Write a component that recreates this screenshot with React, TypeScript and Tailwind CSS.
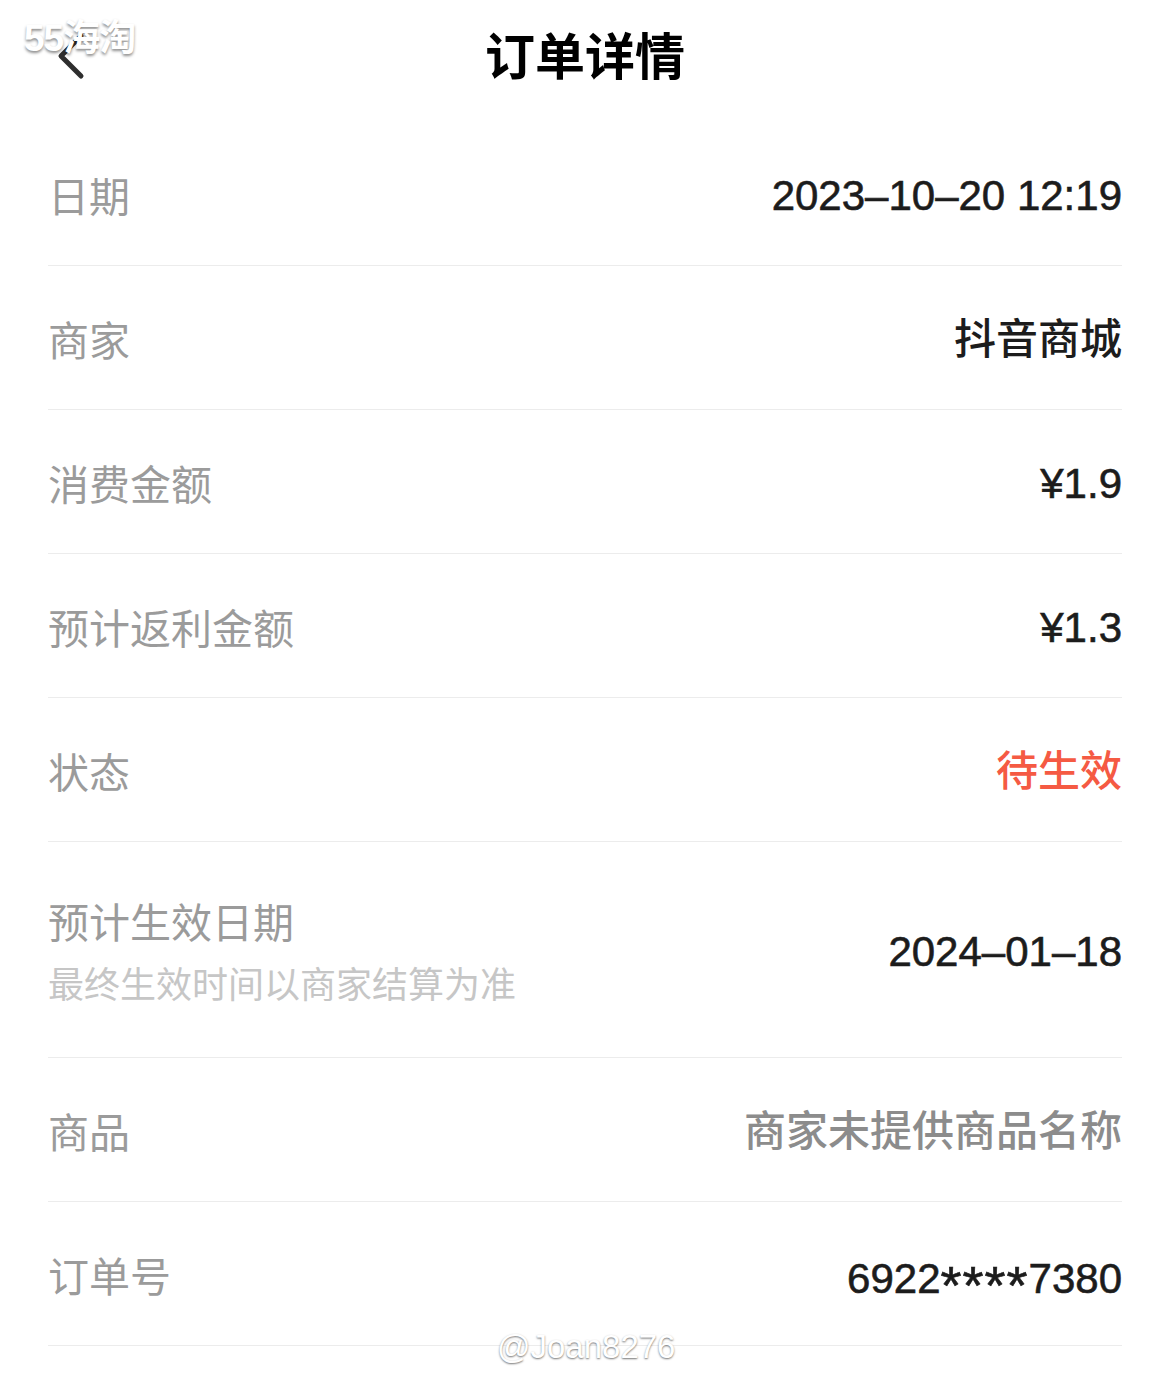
const rows: { label: string; value: string; tone?: "red" | "muted"; hint?: string }[] = [
  { label: "日期", value: "2023–10–20 12:19" },
  { label: "商家", value: "抖音商城" },
  { label: "消费金额", value: "¥1.9" },
  { label: "预计返利金额", value: "¥1.3" },
  { label: "状态", value: "待生效", tone: "red" },
  { label: "预计生效日期", value: "2024–01–18", hint: "最终生效时间以商家结算为准" },
  { label: "商品", value: "商家未提供商品名称", tone: "muted" },
  { label: "订单号", value: "6922****7380" },
];

function BackIcon() {
  return (
    <svg width="32" height="50" viewBox="0 0 32 50" fill="none">
      <path d="M25 4 L5 24 L25 44" stroke="#2e2e2e" strokeWidth="5" strokeLinecap="round" strokeLinejoin="round" />
    </svg>
  );
}

// asterisks in the order number render wider in the original font
function Value({ text }: { text: string }) {
  const m = text.match(/^(\d+)(\*+)(\d+)$/);
  if (!m) return <>{text}</>;
  return (
    <>
      {m[1]}
      <span className="relative top-[11px] text-[54px] leading-none tracking-[1px]">{m[2]}</span>
      {m[3]}
    </>
  );
}

const isLatin = (s: string) => /^[\x00-\x7f¥–]+$/.test(s);

export default function App() {
  return (
    <div
      className="relative w-[1170px] h-[1398px] bg-white overflow-hidden"
      style={{ fontFamily: '"Liberation Sans", "Noto Sans CJK SC", sans-serif' }}
    >
      <header className="relative h-[122px] flex items-center justify-center">
        <div className="absolute left-[56px] top-[32px]">
          <BackIcon />
        </div>
        <h1 className="text-[50px] font-bold text-black leading-none -mt-[16px] font-['Noto_Sans_CJK_SC',sans-serif]">
          订单详情
        </h1>
      </header>

      <div className="mx-[48px]">
        {rows.map((r) => (
          <div
            key={r.label}
            className={`flex items-center justify-between border-b border-[#ececec] ${r.hint ? "h-[216px]" : "h-[144px]"}`}
          >
            <div className="flex flex-col">
              <span className="text-[41px] leading-[52px] text-[#9b9b9b] font-['Noto_Sans_CJK_SC',sans-serif]">
                {r.label}
              </span>
              {r.hint && (
                <span className="text-[36px] leading-[48px] mt-[12px] text-[#c6c6c6] font-['Noto_Sans_CJK_SC',sans-serif]">
                  {r.hint}
                </span>
              )}
            </div>
            <span
              className={`mt-[5px] text-[42px] leading-[52px] font-medium ${
                isLatin(r.value) ? "[-webkit-text-stroke:0.6px_currentColor]" : ""
              } ${r.tone === "red" ? "text-[#f55a43]" : r.tone === "muted" ? "text-[#8c8c8c]" : "text-[#1c1c1c]"}`}
            >
              <Value text={r.value} />
            </span>
          </div>
        ))}
      </div>

      <div className="absolute left-[24px] top-[20px] text-[37px] font-bold text-white leading-none tracking-[-1px] [text-shadow:0_2px_3px_rgba(0,0,0,0.45)]">
        55海淘
      </div>
      <div className="absolute left-[497px] top-[1330px] text-[33px] text-white leading-none [text-shadow:0_1px_2px_rgba(0,0,0,0.55)]">
        @Joan8276
      </div>
    </div>
  );
}
